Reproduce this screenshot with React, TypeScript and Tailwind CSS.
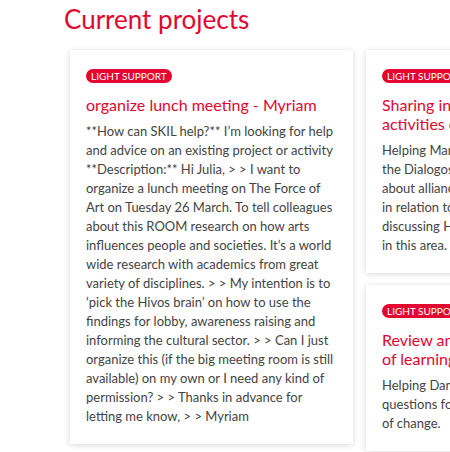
import React from "react"

const red = "text-[#e3062f]"

type Project = {
  title: React.ReactNode
  body: React.ReactNode
}

function ProjectCard({ project }: { project: Project }) {
  return (
    <div className="w-[283px] shrink-0 bg-white px-4 pt-[19px] pb-[18px] shadow-[0_1px_6px_rgba(0,0,0,0.16)]">
      <span className="block w-fit rounded-full bg-[#e3062f] px-[5px] text-[10px] leading-[14px] text-white uppercase">
        Light support
      </span>
      <h2 className={`mt-3 text-[16px] leading-[19px] ${red}`}>{project.title}</h2>
      <p className="mt-[8px] text-[13px] leading-[19px] text-[#444]">{project.body}</p>
    </div>
  )
}

const lunch: Project = {
  title: "organize lunch meeting - Myriam",
  body: (
    <>
      **How can SKIL help?** I’m looking for help and advice on an existing project or activity
      **Description:** Hi Julia, &gt; &gt; I want to organize a lunch meeting on The Force of Art on
      Tuesday 26 March. To tell colleagues about this ROOM research on how arts influences people and
      societies. It’s a world wide research with academics from great variety of disciplines. &gt;
      &gt; My intention is to ‘pick the Hivos brain’ on how to use the findings for lobby, awareness
      raising and informing the cultural sector. &gt; &gt; Can I just organize this (if the big
      meeting room is still available) on my own or I need any kind of permission? &gt; &gt; Thanks
      in advance for letting me know, &gt; &gt; Myriam
    </>
  ),
}

const sharing: Project = {
  title: (
    <>
      Sharing information on the
      <br />
      activities of Hivos
    </>
  ),
  body: (
    <>
      Helping Marieke to prepare for
      <br />
      the Dialogos meeting, with input
      <br />
      about alliance building, especially
      <br />
      in relation to inclusion, and
      <br />
      discussing Hivos’ experiences
      <br />
      in this area.
    </>
  ),
}

const review: Project = {
  title: (
    <>
      Review and improvement
      <br />
      of learning questions
    </>
  ),
  body: (
    <>
      Helping Danielle to review learning
      <br />
      questions for the updated theory
      <br />
      of change.
    </>
  ),
}

export default function App() {
  return (
    <div className="h-[452px] w-[450px] overflow-hidden bg-white font-['Lato',sans-serif]">
      <h1 className={`pl-16 pt-[2px] text-[26px] leading-[34px] ${red}`}>Current projects</h1>

      <div className="mt-[14px] flex items-start gap-[13px] pl-[70px]">
        <ProjectCard project={lunch} />
        <div className="flex shrink-0 flex-col gap-3">
          <ProjectCard project={sharing} />
          <ProjectCard project={review} />
        </div>
      </div>
    </div>
  )
}
